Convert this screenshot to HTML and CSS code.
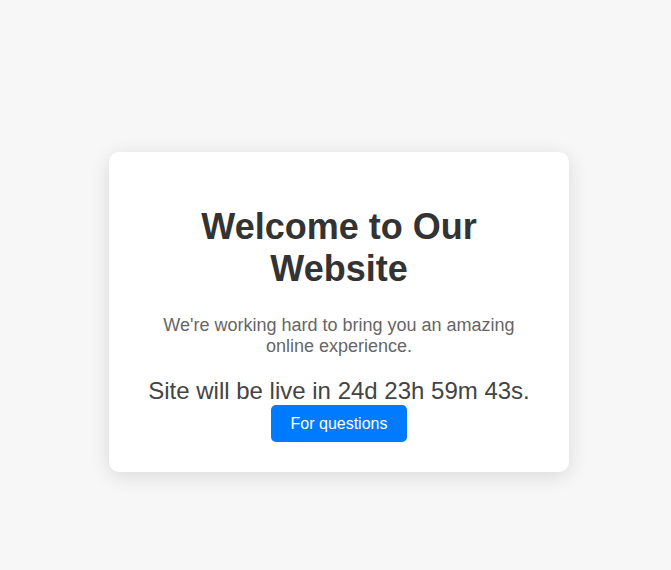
FILE: index.html
```html
<!DOCTYPE html>
<html lang="en">
<head>
<meta charset="utf-8">
<title>Coming Soon</title>
<link rel="stylesheet" href="styles.css">
</head>
<body>
  <main class="card">
    <h1 class="title">Welcome to Our Website</h1>
    <p class="lead">We're working hard to bring you an amazing online experience.</p>
    <div class="countdown">Site will be live in 24d 23h 59m 43s.</div>
    <a class="btn" href="#">For questions</a>
  </main>
</body>
</html>
```
FILE: styles.css
```css
html, body {
  margin: 0;
  height: 100%;
}
body {
  background: #f7f7f7;
  font-family: "Liberation Sans", Arial, sans-serif;
  display: flex;
  justify-content: center;
  align-items: flex-start;
  padding: 152px 0 0 7px;
  box-sizing: border-box;
}
.card {
  width: 400px;
  padding: 30px;
  background: #fff;
  border-radius: 10px;
  box-shadow: 0 4px 20px rgba(0, 0, 0, 0.12);
  text-align: center;
}
.title {
  font-size: 36px;
  font-weight: bold;
  color: #333;
  margin: 24px 0 25px;
}
.lead {
  font-size: 18px;
  color: #666;
  margin: 0 0 20px;
}
.countdown {
  font-size: 24px;
  color: #444;
}
.btn {
  display: inline-block;
  background: #007bff;
  color: #fff;
  text-decoration: none;
  font-size: 16px;
  line-height: 18px;
  padding: 10px 20px 9px;
  border-radius: 5px;
  vertical-align: top;
}
```
